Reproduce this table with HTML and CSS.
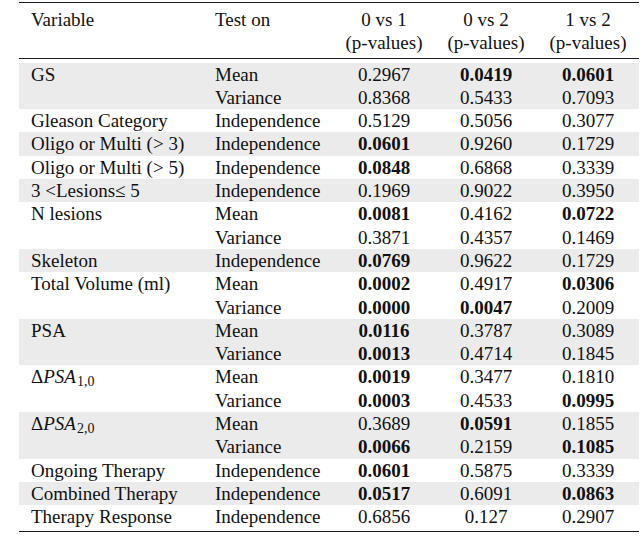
FILE: index.html
```html
<!DOCTYPE html>
<html>
<head>
<meta charset="utf-8">
<link rel="stylesheet" href="styles.css">
</head>
<body>
<table class="stats">
  <colgroup>
    <col class="c-var"><col class="c-test"><col class="c-num"><col class="c-num"><col class="c-num">
  </colgroup>
  <thead>
    <tr>
      <th class="l">Variable</th>
      <th class="l">Test on</th>
      <th>0 vs 1<br>(p-values)</th>
      <th>0 vs 2<br>(p-values)</th>
      <th>1 vs 2<br>(p-values)</th>
    </tr>
  </thead>
  <tbody class="gap"><tr><td colspan="5"></td></tr></tbody>
  <tbody class="shade">
    <tr><td class="l">GS</td><td class="l">Mean</td><td>0.2967</td><td><b>0.0419</b></td><td><b>0.0601</b></td></tr>
    <tr><td class="l"></td><td class="l">Variance</td><td>0.8368</td><td>0.5433</td><td>0.7093</td></tr>
  </tbody>
  <tbody>
    <tr><td class="l">Gleason Category</td><td class="l">Independence</td><td>0.5129</td><td>0.5056</td><td>0.3077</td></tr>
  </tbody>
  <tbody class="shade">
    <tr><td class="l">Oligo or Multi (&gt; 3)</td><td class="l">Independence</td><td><b>0.0601</b></td><td>0.9260</td><td>0.1729</td></tr>
  </tbody>
  <tbody>
    <tr><td class="l">Oligo or Multi (&gt; 5)</td><td class="l">Independence</td><td><b>0.0848</b></td><td>0.6868</td><td>0.3339</td></tr>
  </tbody>
  <tbody class="shade">
    <tr><td class="l">3 &lt;Lesions&le; 5</td><td class="l">Independence</td><td>0.1969</td><td>0.9022</td><td>0.3950</td></tr>
  </tbody>
  <tbody>
    <tr><td class="l">N lesions</td><td class="l">Mean</td><td><b>0.0081</b></td><td>0.4162</td><td><b>0.0722</b></td></tr>
    <tr><td class="l"></td><td class="l">Variance</td><td>0.3871</td><td>0.4357</td><td>0.1469</td></tr>
  </tbody>
  <tbody class="shade">
    <tr><td class="l">Skeleton</td><td class="l">Independence</td><td><b>0.0769</b></td><td>0.9622</td><td>0.1729</td></tr>
  </tbody>
  <tbody>
    <tr><td class="l">Total Volume (ml)</td><td class="l">Mean</td><td><b>0.0002</b></td><td>0.4917</td><td><b>0.0306</b></td></tr>
    <tr><td class="l"></td><td class="l">Variance</td><td><b>0.0000</b></td><td><b>0.0047</b></td><td>0.2009</td></tr>
  </tbody>
  <tbody class="shade">
    <tr><td class="l">PSA</td><td class="l">Mean</td><td><b>0.0116</b></td><td>0.3787</td><td>0.3089</td></tr>
    <tr><td class="l"></td><td class="l">Variance</td><td><b>0.0013</b></td><td>0.4714</td><td>0.1845</td></tr>
  </tbody>
  <tbody>
    <tr><td class="l">&Delta;<i>PSA</i><sub>1,0</sub></td><td class="l">Mean</td><td><b>0.0019</b></td><td>0.3477</td><td>0.1810</td></tr>
    <tr><td class="l"></td><td class="l">Variance</td><td><b>0.0003</b></td><td>0.4533</td><td><b>0.0995</b></td></tr>
  </tbody>
  <tbody class="shade">
    <tr><td class="l">&Delta;<i>PSA</i><sub>2,0</sub></td><td class="l">Mean</td><td>0.3689</td><td><b>0.0591</b></td><td>0.1855</td></tr>
    <tr><td class="l"></td><td class="l">Variance</td><td><b>0.0066</b></td><td>0.2159</td><td><b>0.1085</b></td></tr>
  </tbody>
  <tbody>
    <tr><td class="l">Ongoing Therapy</td><td class="l">Independence</td><td><b>0.0601</b></td><td>0.5875</td><td>0.3339</td></tr>
  </tbody>
  <tbody class="shade">
    <tr><td class="l">Combined Therapy</td><td class="l">Independence</td><td><b>0.0517</b></td><td>0.6091</td><td><b>0.0863</b></td></tr>
  </tbody>
  <tbody>
    <tr><td class="l">Therapy Response</td><td class="l">Independence</td><td>0.6856</td><td>0.127</td><td>0.2907</td></tr>
  </tbody>
  <tbody class="end"><tr><td colspan="5"></td></tr></tbody>
</table>
</body>
</html>
```

FILE: styles.css
```css
html, body {
  margin: 0;
  padding: 0;
  background: #ffffff;
}

body {
  padding: 2px 0 0 19px;
  font-family: "Liberation Serif", "Times New Roman", serif;
  font-size: 19px;
  color: #111111;
}

.stats {
  width: 620px;
  table-layout: fixed;
  border-collapse: collapse;
  border-top: 1.5px solid #1a1a1a;
  border-bottom: 1.5px solid #1a1a1a;
}

.c-var { width: 184px; }
.c-test { width: 130px; }
.c-num { width: 102px; }

.stats th,
.stats td {
  padding: 0;
  line-height: 23.3px;
  height: 23.3px;
  text-align: center;
  white-space: nowrap;
  font-weight: normal;
}

.stats th {
  padding-top: 5px;
  padding-bottom: 3px;
  border-bottom: 1px solid #1a1a1a;
  vertical-align: top;
}

.stats .l {
  text-align: left;
  padding-left: 12px;
}

.stats b {
  font-weight: bold;
}

.stats .shade td {
  background: #ebebeb;
}

.stats .gap td {
  height: 4px;
  line-height: 0;
}

.stats .end td {
  height: 2px;
  line-height: 0;
}

.stats sub {
  font-size: 14px;
  line-height: 0;
  vertical-align: -3px;
  font-style: normal;
  margin-left: 1px;
}
```
